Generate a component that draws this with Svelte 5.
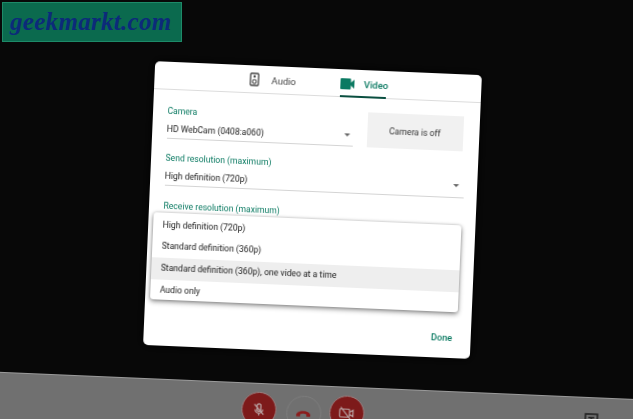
<script lang="ts">
  const options = [
    { label: 'High definition (720p)', active: false },
    { label: 'Standard definition (360p)', active: false },
    { label: 'Standard definition (360p), one video at a time', active: true },
    { label: 'Audio only', active: false },
  ];
</script>

<div class="viewport">
  <div class="stage">
    <main class="main">
      <section class="dialog" role="dialog" aria-label="Settings">
        <nav class="tabs">
          <div class="tab">
            <svg class="icon-audio" viewBox="0 0 10 14" width="10" height="14" aria-hidden="true">
              <rect x="1" y="1" width="8" height="12" rx="1" fill="none" stroke="#444" stroke-width="1.3" />
              <circle cx="5" cy="4" r="1.2" fill="#444" />
              <circle cx="5" cy="9.2" r="1.9" fill="none" stroke="#444" stroke-width="1.1" />
            </svg>
            <span>Audio</span>
          </div>
          <div class="tab selected">
            <svg class="icon-video" viewBox="0 0 14 11" width="14" height="11" aria-hidden="true">
              <path d="M1 0h8.5a1 1 0 0 1 1 1v3L14 1v9l-3.500-3v3a1 1 0 0 1-1 1H1a1 1 0 0 1-1-1V1a1 1 0 0 1 1-1z" fill="#0b7a62" />
            </svg>
            <span>Video</span>
          </div>
        </nav>

        <div class="body">
          <div class="row">
            <div class="field camera">
              <div class="label">Camera</div>
              <div class="value">HD WebCam (0408:a060)</div>
              <i class="arrow"></i>
            </div>
            <div class="preview">Camera is off</div>
          </div>
          <div class="field send">
            <div class="label">Send resolution (maximum)</div>
            <div class="value">High definition (720p)</div>
            <i class="arrow"></i>
          </div>
          <div class="field receive">
            <div class="label">Receive resolution (maximum)</div>
          </div>
        </div>

        <ul class="menu">
          {#each options as o}
            <li class:active={o.active}>{o.label}</li>
          {/each}
        </ul>

        <footer class="footer">Done</footer>
      </section>
    </main>

    <div class="bar">
      <div class="controls">
        <button class="round red" aria-label="Microphone off">
          <svg viewBox="0 0 16 16" width="15" height="15" aria-hidden="true">
            <path d="M8 2a2 2 0 0 1 2 2v4a2 2 0 0 1-4 0V4a2 2 0 0 1 2-2zM4 8a4 4 0 0 0 8 0M8 12v2.500" fill="none" stroke="#b9a3a3" stroke-width="1.400" />
            <path d="M3 2.500l10 11" stroke="#b9a3a3" stroke-width="1.400" />
          </svg>
        </button>
        <button class="round hangup" aria-label="Leave call">
          <svg viewBox="0 0 18 8" width="16" height="8" aria-hidden="true">
            <path d="M1 6c0-3 3.500-5 8-5s8 2 8 5c0 .8-.5 1.200-1 1.200h-2.500c-.6 0-1-.4-1-1V4.600C11.500 4 10.300 3.800 9 3.800S6.500 4 5.500 4.600v1.600c0 .6-.4 1-1 1H2c-.5 0-1-.4-1-1.200z" fill="#8b1c1c" />
          </svg>
        </button>
        <button class="round red" aria-label="Camera off">
          <svg viewBox="0 0 18 16" width="16" height="15" aria-hidden="true">
            <path d="M2.500 3.500h9a1 1 0 0 1 1 1v7a1 1 0 0 1-1 1h-9a1 1 0 0 1-1-1v-7a1 1 0 0 1 1-1zM12.500 7l4-2.500v7l-4-2.500" fill="none" stroke="#b9a3a3" stroke-width="1.300" />
            <path d="M2.500 1.500l11 13" stroke="#b9a3a3" stroke-width="1.300" />
          </svg>
        </button>
      </div>
      <div class="more">
        <svg viewBox="0 0 14 12" width="14" height="12" aria-hidden="true">
          <rect x="1" y="1" width="12" height="10" fill="none" stroke="#222" stroke-width="1.600" />
          <path d="M4 4.500h6M7 4.500V9" stroke="#222" stroke-width="1.600" />
        </svg>
      </div>
    </div>
  </div>

  <div class="watermark"><span>geekmarkt.com</span></div>
</div>

<style>
  :global(body) {
    margin: 0;
    background: #080808;
  }

  .viewport {
    position: relative;
    width: 633px;
    height: 419px;
    overflow: hidden;
    background: #080808;
    font-family: Roboto, 'Liberation Sans', sans-serif;
  }

  /* the whole screen was photographed slightly tilted */
  .stage {
    width: 720px;
    height: 500px;
    margin-left: -48.5px;
    margin-top: -40px;
    display: flex;
    flex-direction: column;
    transform: rotate(2.45deg);
    transform-origin: 360px 250px;
    filter: blur(0.4px);
  }

  .main {
    height: 425px;
    flex: none;
    box-sizing: border-box;
    padding-top: 108px;
    display: flex;
    justify-content: center;
  }

  .dialog {
    position: relative;
    width: 327px;
    height: 284px;
    display: flex;
    flex-direction: column;
    background: #fff;
    border-radius: 5px;
    box-shadow: 0 0 10px #000;
  }

  .tabs {
    height: 28px;
    box-sizing: border-box;
    display: flex;
    justify-content: center;
    gap: 44px;
    padding-left: 3px;
    border-bottom: 1px solid #dcdcdc;
    font-size: 9.5px;
    color: #444;
  }

  .tab {
    position: relative;
    display: flex;
    align-items: center;
    gap: 12px;
    height: 28px;
  }

  .tab.selected {
    color: #0b7a62;
    font-weight: 500;
    gap: 10px;
  }

  .tab.selected::after {
    content: '';
    position: absolute;
    left: 0;
    right: 2px;
    bottom: 0;
    height: 2px;
    background: #0a4f40;
  }

  .body {
    padding: 15px 13px 0 15px;
    font-size: 8.6px;
  }

  .row {
    display: flex;
    gap: 14px;
  }

  .field {
    position: relative;
  }

  .camera {
    width: 186px;
    height: 33px;
    border-bottom: 1px solid #d4d4d4;
  }

  .label {
    height: 12px;
    line-height: 12px;
    color: #0b7a62;
  }

  .value {
    height: 12px;
    line-height: 12px;
    color: #1a1a1a;
    margin-top: 5.500px;
  }

  .arrow {
    position: absolute;
    width: 0;
    height: 0;
    border: 3px solid transparent;
    border-top: 3px solid #666;
    border-bottom: 0;
  }

  .camera .arrow {
    left: 177px;
    top: 21px;
  }

  .preview {
    width: 96px;
    height: 35px;
    margin-top: -1px;
    display: flex;
    align-items: center;
    justify-content: center;
    background: #f1f1f1;
    color: #333;
    font-size: 8.6px;
  }

  .send {
    width: 299px;
    height: 33px;
    margin-top: 13px;
    border-bottom: 1px solid #d4d4d4;
  }

  .send .value {
    margin-top: 6px;
  }

  .send .arrow {
    left: 288px;
    top: 20px;
  }

  .receive {
    margin-top: 14px;
  }

  .menu {
    position: absolute;
    left: 5px;
    top: 151px;
    width: 308px;
    margin: 0;
    padding: 1.500px 0 0;
    box-sizing: border-box;
    height: 87px;
    list-style: none;
    background: #fff;
    border-radius: 3px;
    box-shadow: 0 2px 5px rgba(0, 0, 0, 0.45), 0 0 3px rgba(0, 0, 0, 0.2);
    font-size: 8.6px;
    color: #1a1a1a;
  }

  .menu li {
    height: 21.800px;
    line-height: 21.800px;
    padding-left: 10px;
  }

  .menu li.active {
    background: #eeeeee;
  }

  .footer {
    margin-top: auto;
    align-self: flex-end;
    padding: 0 18px 14px 0;
    line-height: 12px;
    font-size: 9.2px;
    font-weight: 500;
    color: #0b7a62;
  }

  .bar {
    flex: 1;
    position: relative;
    background: #707070;
    border-top: 1px solid #9a9a9a;
    box-sizing: border-box;
    padding: 8px 1px 0 0;
    display: flex;
    justify-content: center;
  }

  .controls {
    display: flex;
    gap: 8px;
  }

  .round {
    width: 35px;
    height: 35px;
    padding: 0;
    border-radius: 50%;
    display: flex;
    align-items: center;
    justify-content: center;
    background: transparent;
    border: 1px solid #7d7d7d;
  }

  .round.red {
    background: #7d1a1a;
    border-color: #9b8080;
  }

  .round.red:first-child {
    margin-right: 1.500px;
  }

  .round.hangup {
    margin-top: 2px;
  }

  .more {
    position: absolute;
    top: 12px;
    right: 65px;
  }

  .watermark {
    position: absolute;
    left: 2px;
    top: 2px;
    width: 180px;
    height: 40px;
    box-sizing: border-box;
    display: flex;
    align-items: center;
    padding-left: 7px;
    background: #0b6a4e;
    border: 1.500px solid #1d8a68;
    color: #0c2a7a;
    font: italic 700 25px 'Liberation Serif', serif;
    letter-spacing: 0.3px;
  }
</style>
